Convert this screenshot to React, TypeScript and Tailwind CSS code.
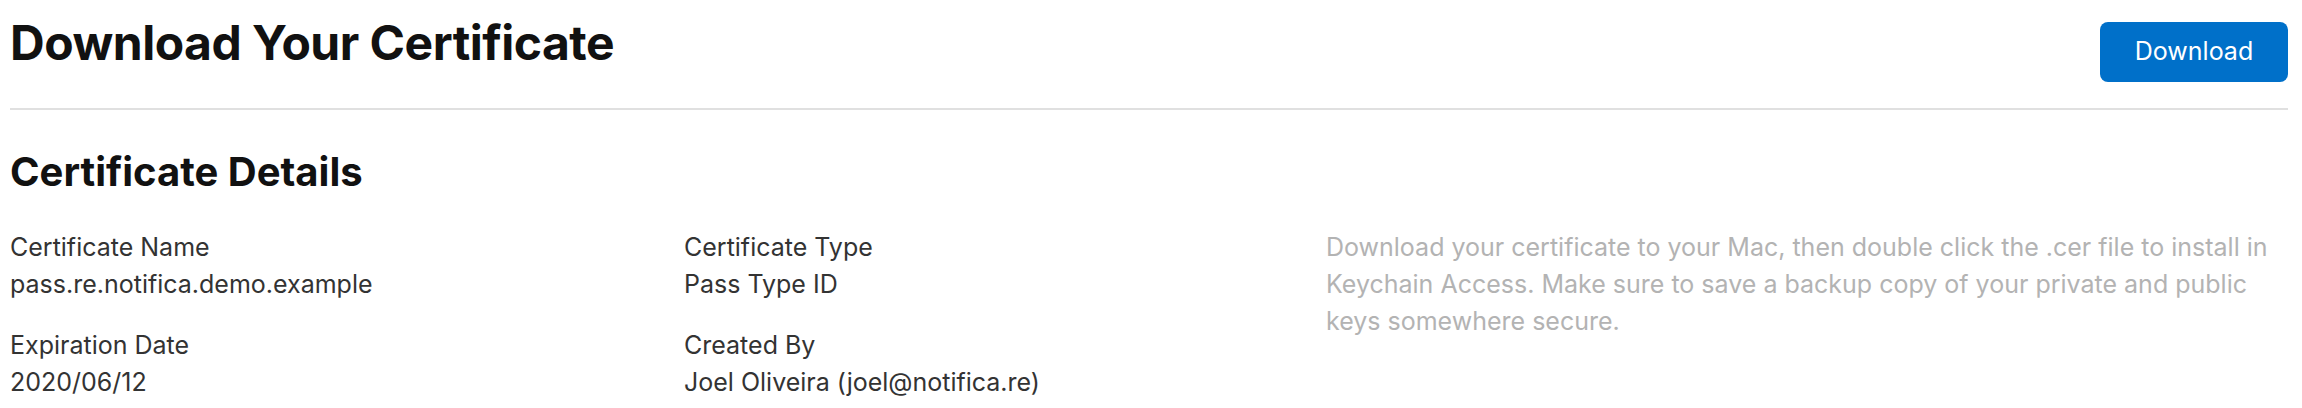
import React from 'react';

const details = [
  [
    { label: 'Certificate Name', value: 'pass.re.notifica.demo.example' },
    { label: 'Expiration Date', value: '2020/06/12' },
  ],
  [
    { label: 'Certificate Type', value: 'Pass Type ID' },
    { label: 'Created By', value: 'Joel Oliveira (joel@notifica.re)' },
  ],
];

const App = () => {
  return (
    <div className="min-h-screen bg-white pl-[10px] pr-[14px] pt-[14px] font-['Inter','Liberation_Sans',sans-serif] text-[#333333]">
      {/* Header */}
      <div className="flex items-start justify-between">
        <h1 className="text-[48px] font-bold leading-[58px] tracking-[-0.5px] text-[#111111]">
          Download Your Certificate
        </h1>
        <button className="mt-[8px] h-[60px] w-[188px] rounded-[8px] bg-[#0070c9] text-[25px] text-white">
          Download
        </button>
      </div>

      <hr className="mt-[26px] border-0 border-t-2 border-[#e0e0e0]" />

      {/* Details */}
      <h2 className="mt-[38px] text-[40px] font-bold leading-[48px] text-[#111111]">
        Certificate Details
      </h2>

      <div className="mt-[33px] flex text-[25px] leading-[37px]">
        {details.map((col, i) => (
          <div key={i} className={i === 0 ? 'w-[674px] space-y-[24px]' : 'w-[642px] space-y-[24px]'}>
            {col.map((item) => (
              <div key={item.label}>
                <div>{item.label}</div>
                <div>{item.value}</div>
              </div>
            ))}
          </div>
        ))}
        <p className="flex-1 text-[#b3b3b3]">
          Download your certificate to your Mac, then double click the .cer file to install in Keychain Access. Make sure to save a backup copy of your private and public keys somewhere secure.
        </p>
      </div>
    </div>
  );
};

export default App;
